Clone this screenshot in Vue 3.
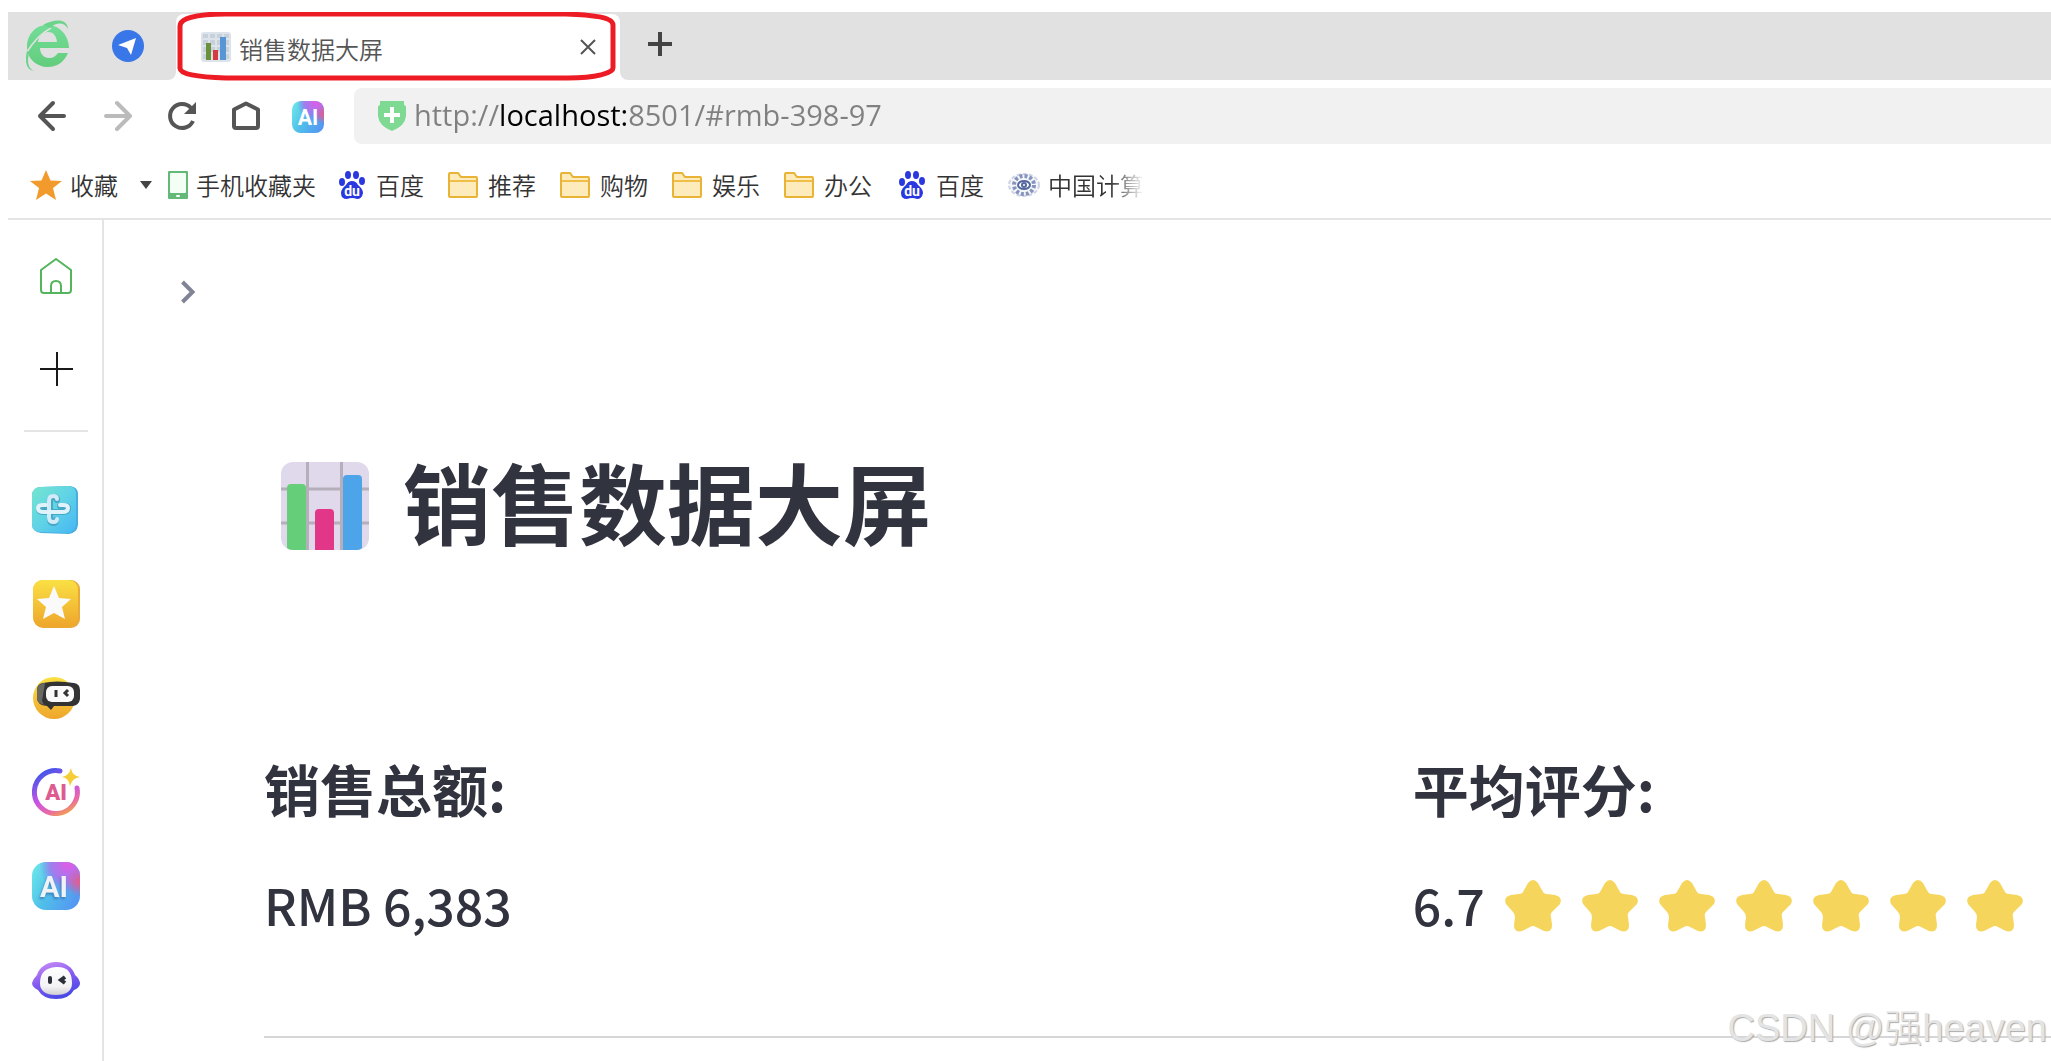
<script setup>
import { ref } from 'vue';

const url = ref('http://localhost:8501/#rmb-398-97');
const sales = 'RMB 6,383';
const rating = 6.7;
const starCount = Math.round(rating);

const bookmarks = [
    { icon: 'baidu', name: '百度' },
    { icon: 'folder', name: '推荐' },
    { icon: 'folder', name: '购物' },
    { icon: 'folder', name: '娱乐' },
    { icon: 'folder', name: '办公' },
    { icon: 'baidu', name: '百度' },
    { icon: 'ccf', name: '中国计算', faded: true },
];
</script>

<template>
    <div class="window">
        <!-- tab strip -->
        <header class="tabs">
            <div class="tabs-left">
                <svg class="logo" width="44" height="52" viewBox="0 0 44 52" aria-hidden="true">
                    <defs>
                        <linearGradient id="logoGreen" x1="0" y1="0" x2="0" y2="1">
                            <stop offset="0" stop-color="#73dc97" />
                            <stop offset="1" stop-color="#63cd7d" />
                        </linearGradient>
                    </defs>
                    <path fill="url(#logoGreen)" d="M1 27C1 14 10 5 21 5C33 5 42 14 43 27V28H14C14 34 18 38 23 38C27 38 30 36 32 33H42C38 42 31 47 22 47C11 47 1 39 1 27ZM12 22H31C30 15 27 12 22 12C17 12 13 16 12 22Z" />
                    <path fill="none" stroke="#e1e1e1" stroke-width="1.5" d="M1 32C7 22 14 14 25 8" />
                    <path fill="#6ad58a" d="M17 5C28 -1 41 -2 42 9C38 2 31 2 24 8ZM3 32C1 42 2 48 8 51C-1 50 -1 39 1 31Z" />
                </svg>
                <svg width="32" height="32" viewBox="0 0 32 32" aria-hidden="true">
                    <circle cx="16" cy="16" r="16" fill="#3976e8" />
                    <path fill="#fff" d="M24 8L19 25L15 18L6 15Z" />
                </svg>
            </div>
            <div class="tab-wrap">
                <div class="tab">
                    <svg width="30" height="30" viewBox="0 0 30 30" aria-hidden="true">
                        <rect width="30" height="30" rx="3" fill="#dce3ea" />
                        <path fill="#c8d1da" d="M2 2h5v4H2zM9 2h5v4H9zM16 2h5v4h-5zM23 2h5v4h-5zM2 8h5v5H2zM9 8h5v5H9zM16 8h5v5h-5zM23 8h5v5h-5zM2 15h5v5H2zM9 15h5v5H9zM16 15h5v5h-5zM23 15h5v5h-5zM2 22h5v5H2zM23 22h5v5h-5z" />
                        <path fill="#69913b" d="M5 11h5v17H5z" />
                        <path fill="#d73b42" d="M12 18h5v10h-5z" />
                        <path fill="#5795d4" d="M19 5h6v23h-6z" />
                    </svg>
                    <span class="tab-title">销售数据大屏</span>
                    <button class="btn close" aria-label="关闭标签页">
                        <svg width="16" height="16" viewBox="0 0 16 16"><path d="M1 1L15 15M15 1L1 15" stroke="#555" stroke-width="2" /></svg>
                    </button>
                </div>
                <svg class="marker" width="444" height="72" viewBox="0 0 444 72" aria-hidden="true">
                    <path d="M4 57V14C4 7 18 2 50 2H390C420 3 437 6 437 13V56C437 61 420 66 392 66H50C20 65 4 62 4 56" />
                </svg>
            </div>
            <div class="tabs-right">
                <button class="btn" aria-label="新建标签页">
                    <svg width="24" height="24" viewBox="0 0 24 24"><path d="M12 0V24M0 12H24" stroke="#444" stroke-width="4" /></svg>
                </button>
            </div>
        </header>

        <!-- navigation -->
        <nav class="toolbar">
            <div class="nav-buttons">
                <button class="btn" aria-label="后退">
                    <svg width="32" height="32" viewBox="0 0 32 32" class="nav-icon"><path d="M28 16H4M17 3L4 16L17 29" /></svg>
                </button>
                <button class="btn" aria-label="前进">
                    <svg width="32" height="32" viewBox="0 0 32 32" class="nav-icon off"><path d="M6 16H30M17 3L30 16L17 29" /></svg>
                </button>
                <button class="btn" aria-label="刷新">
                    <svg width="32" height="32" viewBox="0 0 32 32">
                        <path d="M29 21A12 12 0 1 1 27 8" fill="none" stroke="#555" stroke-width="4" />
                        <path d="M32 2V14H20Z" fill="#555" />
                    </svg>
                </button>
                <button class="btn" aria-label="主页">
                    <svg width="32" height="32" viewBox="0 0 32 32"><path d="M6 9.500L18 3.500L30 9.500V26Q30 28 28 28H8Q6 28 6 26Z" fill="none" stroke="#555" stroke-width="4" stroke-linejoin="round" /></svg>
                </button>
                <button class="btn ai" aria-label="AI">
                    <svg width="32" height="32" viewBox="0 0 48 48">
                        <defs>
                            <linearGradient id="aiBase" x1="0" y1="0.3" x2="1" y2="0.8">
                                <stop offset="0" stop-color="#68e1ea" />
                                <stop offset="0.4" stop-color="#50bfe9" />
                                <stop offset="1" stop-color="#5494f3" />
                            </linearGradient>
                            <radialGradient id="aiPink" cx="0.75" cy="0.05" r="0.6">
                                <stop offset="0" stop-color="#e25ce6" />
                                <stop offset="0.6" stop-color="#b06cee" stop-opacity="0.8" />
                                <stop offset="1" stop-color="#7b78f0" stop-opacity="0" />
                            </radialGradient>
                            <radialGradient id="aiRed" cx="1" cy="0.42" r="0.3">
                                <stop offset="0" stop-color="#e85a8a" />
                                <stop offset="1" stop-color="#e85a8a" stop-opacity="0" />
                            </radialGradient>
                        </defs>
                        <rect width="48" height="48" rx="13" fill="url(#aiBase)" />
                        <rect width="48" height="48" rx="13" fill="url(#aiPink)" />
                        <rect width="48" height="48" rx="13" fill="url(#aiRed)" />
                        <text x="24" y="36" class="ai-text" font-size="32">AI</text>
                    </svg>
                </button>
            </div>
            <div class="address">
                <svg width="28" height="30" viewBox="0 0 28 30" aria-hidden="true">
                    <path d="M2 0H26V3Q26 5 28 5V15Q27 25 14 30Q1 25 0 15V5Q2 5 2 3Z" fill="#7ed992" />
                    <path d="M14 6V22M6 14H22" stroke="#fff" stroke-width="4" />
                </svg>
                <input v-model="url" type="text" aria-label="地址" spellcheck="false" />
            </div>
        </nav>

        <!-- bookmarks -->
        <nav class="bookmarks">
            <a href="#" class="bookmark fav">
                <svg width="32" height="30" viewBox="0 0 32 30" aria-hidden="true"><path d="M16 0L20.500 10.500L32 11L23 18L26 30L16 23.500L6 30L9 18L0 11L11.500 10.500Z" fill="#f29b2c" /></svg>
                收藏
            </a>
            <button class="btn caret" aria-label="展开收藏">
                <svg width="12" height="8" viewBox="0 0 12 8"><path d="M0 0H12L6 8Z" fill="#444" /></svg>
            </button>
            <a href="#" class="bookmark fav">
                <svg width="20" height="28" viewBox="0 0 20 28" aria-hidden="true">
                    <rect width="20" height="28" rx="1" fill="#65b978" />
                    <rect x="2" y="2" width="16" height="20" rx="1" fill="#f3fff5" />
                    <rect x="8" y="24" width="4" height="2" rx="1" fill="#fff" />
                </svg>
                手机收藏夹
            </a>
            <ul>
                <li v-for="(item, i) in bookmarks" :key="i">
                    <a href="#" class="bookmark" :class="{ faded: item.faded }">
                        <svg v-if="item.icon === 'folder'" width="30" height="26" viewBox="0 0 30 26" aria-hidden="true">
                            <path d="M1 2Q1 1 2 1H10L13 5H28Q29 5 29 6V24Q29 25 28 25H2Q1 25 1 24Z" fill="#fdebbc" stroke="#e9b336" stroke-width="2" />
                            <path d="M2 9H28" stroke="#f0bf49" stroke-width="2" />
                        </svg>
                        <svg v-else-if="item.icon === 'baidu'" width="30" height="28" viewBox="0 0 30 28" aria-hidden="true">
                            <g fill="#2938df">
                                <ellipse cx="6" cy="11" rx="3" ry="4" />
                                <ellipse cx="12" cy="4" rx="3" ry="4" />
                                <ellipse cx="20" cy="4" rx="3" ry="4" />
                                <ellipse cx="26" cy="10" rx="3" ry="4" />
                                <path d="M16 10Q20 10 22 14Q27 18 27 22Q26 28 21 28Q16 26 11 28Q5 28 5 22Q5 18 10 14Q12 10 16 10Z" />
                            </g>
                            <text x="16" y="25" class="du-text">du</text>
                        </svg>
                        <svg v-else width="32" height="26" viewBox="0 0 32 26" aria-hidden="true">
                            <ellipse cx="16" cy="13" rx="15" ry="11" fill="#f4f6fa" stroke="#cdd3e5" stroke-width="2" stroke-dasharray="4 2" />
                            <ellipse cx="16" cy="13" rx="10" ry="9" fill="none" stroke="#8694bd" stroke-width="4" stroke-dasharray="3 2" />
                            <ellipse cx="16" cy="13" rx="6" ry="4" fill="#fff" stroke="#5568a0" stroke-width="2" />
                            <circle cx="16" cy="13" r="2" fill="none" stroke="#5568a0" stroke-width="2" />
                        </svg>
                        {{ item.name }}
                    </a>
                </li>
            </ul>
        </nav>

        <div class="body">
            <aside class="sidebar">
                <button class="btn" aria-label="首页">
                    <svg width="32" height="36" viewBox="0 0 32 36" fill="none" stroke="#55b55d" stroke-width="2" stroke-linejoin="round">
                        <path d="M1 12L16 1L31 12V32Q31 35 28 35H4Q1 35 1 32Z" />
                        <path d="M11 35V28Q11 23 16 23Q21 23 21 28V35" />
                    </svg>
                </button>
                <button class="btn" aria-label="添加">
                    <svg width="34" height="36" viewBox="0 0 34 36"><path d="M18 0V34M1 17H34" stroke="#1a1a1a" stroke-width="2" /></svg>
                </button>
                <hr />
                <button class="btn" aria-label="健康">
                    <svg width="48" height="48" viewBox="0 0 48 48">
                        <defs>
                            <linearGradient id="teal" x1="0" y1="0" x2="1" y2="1">
                                <stop offset="0" stop-color="#75e5ce" />
                                <stop offset="0.5" stop-color="#60d3e6" />
                                <stop offset="1" stop-color="#46b7f5" />
                            </linearGradient>
                        </defs>
                        <path d="M9 1L38 0Q46 1 46 8V39Q45 47 37 48L9 47Q0 46 0 38V9Q1 1 9 1Z" fill="#48aede" />
                        <path d="M9 1L37 0Q44 1 44 8V38Q43 46 36 47L9 46Q0 46 0 38V9Q1 1 9 1Z" fill="url(#teal)" />
                        <g fill="none" stroke-linecap="round" stroke-linejoin="round">
                            <path d="M25 14Q25 11 22 11Q18 11 18 16V33Q18 37 21 37Q24 37 24 34M15 20H11Q7 20 7 23Q7 26 12 26H31Q36 26 36 22Q36 20 32 20H28" stroke="#45a8c5" stroke-width="6" />
                            <path d="M25 13Q25 10 21 10Q17 10 17 15V31Q17 36 21 36Q25 36 25 33" stroke="#d3eaf8" stroke-width="4" />
                            <path d="M14 19H11Q6 19 6 22Q6 26 12 26H30Q36 26 36 22Q36 19 31 19H28" stroke="#e0f2fc" stroke-width="4" />
                        </g>
                    </svg>
                </button>
                <button class="btn" aria-label="收藏夹">
                    <svg width="48" height="48" viewBox="0 0 48 48">
                        <defs>
                            <linearGradient id="gold" x1="0" y1="0" x2="0" y2="1">
                                <stop offset="0" stop-color="#fae044" />
                                <stop offset="1" stop-color="#eea62b" />
                            </linearGradient>
                        </defs>
                        <rect x="2" width="46" height="48" rx="9" fill="#eaaa3a" />
                        <rect x="1" width="45" height="47" rx="9" fill="url(#gold)" />
                        <path d="M22 6L27 18L39 19L30 27L33 39L22 33L11 39L14 27L5 19L17 18Z" fill="#fafafa" />
                    </svg>
                </button>
                <button class="btn" aria-label="助手">
                    <svg width="48" height="48" viewBox="0 0 48 48">
                        <circle cx="22" cy="24" r="21" fill="url(#gold)" />
                        <path d="M11 9Q24 6 42 9Q48 10 48 16V25Q47 31 41 32L22 32L19 36L15 32Q5 31 5 24V16Q5 10 11 9Z" fill="#333" />
                        <path d="M13 9L10 27L12 31Q5 29 5 24V16Q5 10 13 9Z" fill="#6a6862" />
                        <rect x="14" y="12" width="28" height="16" rx="6" fill="#fafafa" />
                        <path d="M24 16V23M36 16L33 19L36 22" fill="none" stroke="#333" stroke-width="3" />
                    </svg>
                </button>
                <button class="btn" aria-label="AI 创作">
                    <svg width="48" height="48" viewBox="0 0 48 48">
                        <defs>
                            <linearGradient id="ring" x1="0.3" y1="0" x2="0.8" y2="1">
                                <stop offset="0" stop-color="#4a55ea" />
                                <stop offset="0.5" stop-color="#c953e5" />
                                <stop offset="0.8" stop-color="#e96aa5" />
                                <stop offset="1" stop-color="#f3a548" />
                            </linearGradient>
                        </defs>
                        <path d="M28 3A21.500 21.500 0 1 0 45 20" fill="none" stroke="url(#ring)" stroke-width="5" stroke-linecap="round" />
                        <path d="M39 0Q40 8 48 9Q40 10 38 18Q37 10 30 9Q37 8 39 0Z" fill="#f5cd38" />
                        <text x="24" y="32" class="ai-pink">AI</text>
                    </svg>
                </button>
                <button class="btn" aria-label="AI 工具">
                    <svg width="48" height="48" viewBox="0 0 48 48">
                        <rect width="48" height="48" rx="14" fill="url(#aiBase)" />
                        <rect width="48" height="48" rx="14" fill="url(#aiPink)" />
                        <rect width="48" height="48" rx="14" fill="url(#aiRed)" />
                        <text x="22" y="35" class="ai-text ai-shadow" font-size="29">AI</text>
                    </svg>
                </button>
                <button class="btn" aria-label="聊天">
                    <svg width="48" height="48" viewBox="0 0 48 48">
                        <defs>
                            <linearGradient id="violet" x1="0.2" y1="0" x2="0.6" y2="1">
                                <stop offset="0" stop-color="#c98cf6" />
                                <stop offset="0.5" stop-color="#8359f0" />
                                <stop offset="1" stop-color="#4448e4" />
                            </linearGradient>
                            <linearGradient id="face" x1="0" y1="0" x2="0" y2="1">
                                <stop offset="0" stop-color="#fff" />
                                <stop offset="0.7" stop-color="#f3f3f5" />
                                <stop offset="1" stop-color="#cfcfd4" />
                            </linearGradient>
                        </defs>
                        <path d="M24 6C34 6 41 12 43 19Q48 23 48 28Q47 32 42 34Q37 43 24 43Q11 43 6 34Q0 31 0 27Q1 23 5 19C7 12 14 6 24 6Z" fill="url(#violet)" />
                        <path d="M24 11Q40 10 40 27Q40 39 24 39Q8 39 8 27Q8 12 24 11Z" fill="url(#face)" />
                        <rect x="16" y="20" width="4" height="8" rx="2" fill="#2c3038" />
                        <path d="M33 21L29 24L33 27" fill="none" stroke="#2c3038" stroke-width="4" />
                    </svg>
                </button>
            </aside>

            <main class="main">
                <button class="btn expand" aria-label="展开侧边栏">
                    <svg width="32" height="32" viewBox="0 0 32 32"><path d="M10.500 6L20.500 16L10.500 26" fill="none" stroke="#808495" stroke-width="4" /></svg>
                </button>
                <section class="content">
                    <h1>
                        <svg width="88" height="88" viewBox="0 0 88 88" aria-hidden="true">
                            <rect width="88" height="88" rx="12" fill="#e0d9eb" />
                            <path d="M26.500 0V88M60.500 0V88M0 27H88M0 61H88" stroke="#b4afba" stroke-width="3" />
                            <path d="M6 26Q6 22 10 22H21Q25 22 25 26V88H12Q8 88 6 86Z" fill="#64cf78" />
                            <path d="M34 51Q34 47 38 47H49Q53 47 53 51V88H34Z" fill="#e23789" />
                            <path d="M62 17Q62 13 66 13H77Q81 13 81 17V86Q79 88 76 88H62Z" fill="#4da4e8" />
                        </svg>
                        销售数据大屏
                    </h1>
                    <div class="metrics">
                        <div class="metric">
                            <h2>销售总额:</h2>
                            <p>{{ sales }}</p>
                        </div>
                        <div class="metric">
                            <h2>平均评分:</h2>
                            <p>
                                {{ rating }}
                                <span class="stars">
                                    <svg v-for="n in starCount" :key="n" width="56" height="52" viewBox="0 0 56 52" aria-hidden="true">
                                        <path d="M23 3Q28 -3 33 3L38 12Q39 14 42 14L50 15Q58 17 55 24L47 32Q45 34 46 37L47 45Q47 53 39 51L31 47Q28 45 25 47L17 51Q9 53 9 45L10 37Q10 34 8 32L1 24Q-2 17 6 15L14 14Q17 14 18 12Z" fill="#f5d55b" />
                                    </svg>
                                </span>
                            </p>
                        </div>
                    </div>
                    <hr />
                </section>
            </main>
        </div>
        <div class="watermark">CSDN @强heaven</div>
    </div>
</template>

<style>
body {
    margin: 0;
    background: white;
}
</style>

<style scoped>
.window {
    position: relative;
    display: flex;
    flex-direction: column;
    box-sizing: border-box;
    min-height: 100vh;
    padding: 12px 0 0 8px;
    overflow: hidden;
    font-family: "Noto Sans CJK SC", sans-serif;
    color: #444;
}

svg {
    display: block;
    flex-shrink: 0;
}

.btn {
    display: flex;
    align-items: center;
    justify-content: center;
    padding: 0;
    border: none;
    background: none;
    cursor: pointer;
}

.tabs {
    display: flex;
    height: 68px;
}

.tabs-left {
    display: flex;
    align-items: center;
    gap: 42px;
    box-sizing: border-box;
    width: 168px;
    padding-left: 18px;
    background: #e1e1e1;
    border-radius: 0 0 8px 0;
}

.tab-wrap {
    position: relative;
    box-sizing: border-box;
    width: 444px;
    padding-top: 2px;
    background: linear-gradient(#e1e1e1 20px, white 20px);
}

.tab {
    display: flex;
    align-items: center;
    gap: 8px;
    box-sizing: border-box;
    height: 66px;
    padding: 0 24px 0 25px;
    background: white;
    border-radius: 8px 8px 0 0;
}

.tab-title {
    flex: 1;
    padding-top: 2px;
    font-size: 24px;
    font-weight: 350;
    color: #555;
}

/* hand-drawn red outline over the active tab */
.marker {
    position: absolute;
    top: 0;
    left: 0;
    pointer-events: none;
}

.marker path {
    fill: none;
    stroke: #ed1c24;
    stroke-width: 5;
}

.tabs-right {
    display: flex;
    align-items: center;
    flex: 1;
    padding: 0 0 4px 28px;
    background: #e1e1e1;
    border-radius: 0 0 0 8px;
}

.toolbar {
    display: flex;
    align-items: center;
    gap: 30px;
    padding: 8px 0 0 28px;
}

.nav-buttons {
    display: flex;
    gap: 32px;
}

.nav-buttons .ai {
    padding-top: 2px;
}

.nav-icon {
    fill: none;
    stroke: #555;
    stroke-width: 4;
    stroke-linecap: round;
    stroke-linejoin: round;
}

.nav-icon.off {
    stroke: #bbb;
}

.address {
    display: flex;
    align-items: center;
    flex: 1;
    gap: 8px;
    height: 56px;
    padding-left: 24px;
    background: #f1f1f1;
    border-radius: 8px 0 0 8px;
}

/* the host part of the url is darker than the rest */
.address input {
    flex: 1;
    padding: 0 0 2px;
    border: none;
    outline: none;
    font-family: "Open Sans", "Noto Sans", sans-serif;
    font-size: 29px;
    line-height: 40px;
    color: transparent;
    caret-color: black;
    background: linear-gradient(90deg, #808080 86px, black 86px, black 212px, #808080 212px);
    -webkit-background-clip: text;
    background-clip: text;
}

.bookmarks {
    display: flex;
    align-items: center;
    box-sizing: border-box;
    height: 76px;
    padding: 8px 0 0 22px;
    border-bottom: 2px solid #e4e4e4;
}

.bookmark {
    display: flex;
    align-items: center;
    gap: 10px;
    font-size: 24px;
    line-height: 36px;
    font-weight: 350;
    color: #333;
    text-decoration: none;
    white-space: nowrap;
}

.bookmark.fav {
    gap: 8px;
}

.bookmark.faded {
    gap: 8px;
    -webkit-mask-image: linear-gradient(90deg, black 75%, transparent);
    mask-image: linear-gradient(90deg, black 75%, transparent);
}

.caret {
    padding: 0 16px 0 22px;
}

.bookmarks ul {
    display: flex;
    gap: 24px;
    margin: 0;
    padding: 0 0 0 20px;
    list-style: none;
}

.body {
    display: flex;
    flex: 1;
}

.sidebar {
    display: flex;
    flex-direction: column;
    gap: 46px;
    box-sizing: border-box;
    width: 96px;
    padding: 32px 14px 0 16px;
    border-right: 2px solid #e4e4e4;
}

.sidebar .btn {
    height: 48px;
}

.sidebar hr {
    width: 100%;
    margin: -10px 0 8px;
    border: none;
    border-top: 2px solid #e4e4e4;
}

.ai-text {
    font-family: Roboto, sans-serif;
    font-weight: bold;
    fill: white;
    text-anchor: middle;
}

.ai-shadow {
    fill: #f0f2f6;
    filter: drop-shadow(-1px 2px 1px rgba(40, 80, 150, 0.5));
}

.ai-pink {
    font-family: Roboto, sans-serif;
    font-size: 22px;
    font-weight: 900;
    fill: #dd5b8f;
    text-anchor: middle;
}

.du-text {
    font-family: Roboto, sans-serif;
    font-size: 14px;
    font-weight: bold;
    fill: white;
    text-anchor: middle;
}

.main {
    flex: 1;
    min-width: 0;
    padding: 56px 0 0 68px;
    color: #31333f;
}

.content {
    padding: 144px 0 0 92px;
}

h1 {
    display: flex;
    align-items: flex-start;
    gap: 34px;
    margin: 0;
    padding-left: 17px;
    font-size: 88px;
    line-height: 96px;
    font-weight: bold;
}

h1 svg {
    margin-top: 10px;
}

.metrics {
    display: grid;
    grid-template-columns: 9fr 5fr;
    margin-top: 204px;
}

h2 {
    margin: 0;
    font-size: 56px;
    line-height: 68px;
    font-weight: bold;
}

.metric p {
    display: flex;
    align-items: center;
    gap: 20px;
    margin: 48px 0 0;
    font-size: 50px;
    line-height: 68px;
    font-weight: 500;
    white-space: nowrap;
}

.stars {
    display: flex;
    gap: 21px;
    padding-top: 4px;
}

.content hr {
    margin: 98px 0 24px;
    border: none;
    border-top: 2px solid #d6d6d9;
}

.watermark {
    position: absolute;
    right: 4px;
    bottom: 10px;
    font-family: "Liberation Sans", "Noto Sans CJK SC", sans-serif;
    font-size: 38px;
    line-height: 48px;
    font-weight: 300;
    color: #e4e4e4;
    text-shadow: 1px 1px 1px #aaa;
}
</style>
